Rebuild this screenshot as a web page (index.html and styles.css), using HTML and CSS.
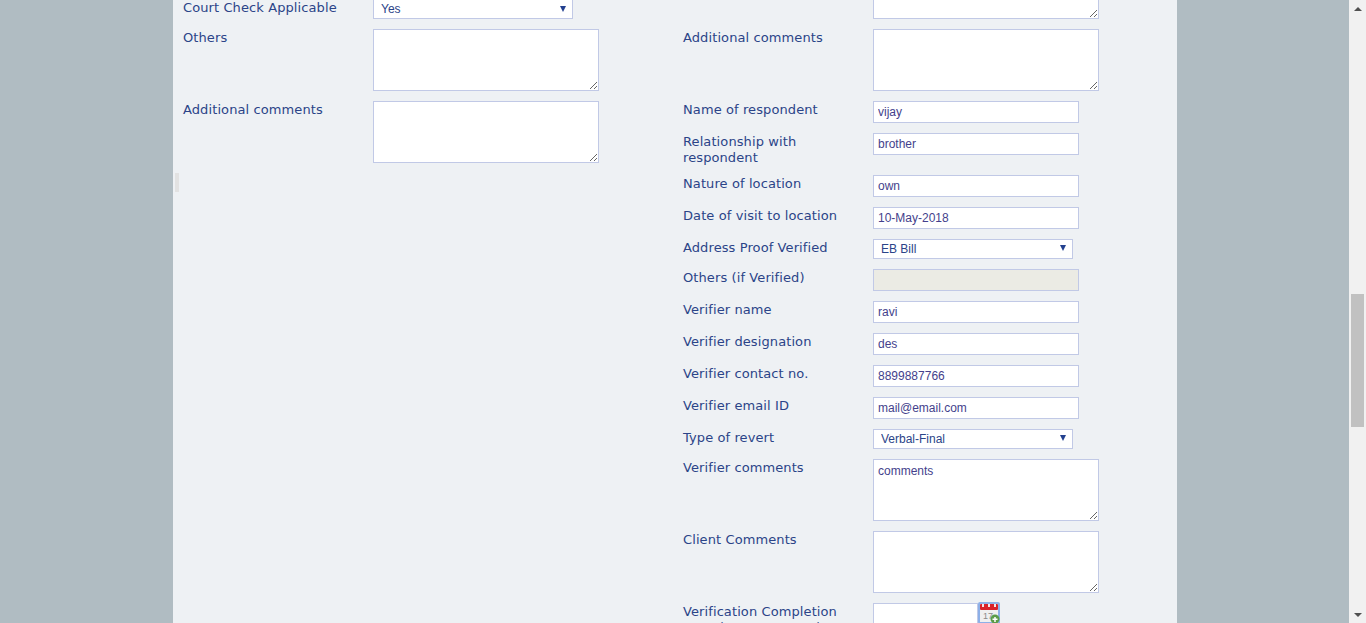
FILE: index.html
```html
<!DOCTYPE html>
<html lang="en">
<head>
    <meta charset="UTF-8">
    <meta name="viewport" content="width=device-width, initial-scale=1.0">
    <title>Verification Form</title>
    <link rel="stylesheet" href="styles.css">
</head>
<body>

    <div class="page">
        <div class="container">
            <div class="drag-handle"></div>
            <form class="form">

                <div class="column">
                    <div class="row row-first">
                        <label>Court Check Applicable</label>
                        <div class="select-box">
                            <select><option>Yes</option></select>
                        </div>
                    </div>
                    <div class="row">
                        <label>Others</label>
                        <textarea></textarea>
                    </div>
                    <div class="row">
                        <label>Additional comments</label>
                        <textarea></textarea>
                    </div>
                </div>

                <div class="column">
                    <div class="row row-first">
                        <label></label>
                        <textarea></textarea>
                    </div>
                    <div class="row">
                        <label>Additional comments</label>
                        <textarea></textarea>
                    </div>
                    <div class="row">
                        <label>Name of respondent</label>
                        <input type="text" value="vijay">
                    </div>
                    <div class="row row-tall">
                        <label>Relationship with respondent</label>
                        <input type="text" value="brother">
                    </div>
                    <div class="row">
                        <label>Nature of location</label>
                        <input type="text" value="own">
                    </div>
                    <div class="row">
                        <label>Date of visit to location</label>
                        <input type="text" value="10-May-2018">
                    </div>
                    <div class="row">
                        <label>Address Proof Verified</label>
                        <div class="select-box">
                            <select><option>EB Bill</option></select>
                        </div>
                    </div>
                    <div class="row">
                        <label>Others (if Verified)</label>
                        <input type="text" disabled>
                    </div>
                    <div class="row">
                        <label>Verifier name</label>
                        <input type="text" value="ravi">
                    </div>
                    <div class="row">
                        <label>Verifier designation</label>
                        <input type="text" value="des">
                    </div>
                    <div class="row">
                        <label>Verifier contact no.</label>
                        <input type="text" value="8899887766">
                    </div>
                    <div class="row">
                        <label>Verifier email ID</label>
                        <input type="text" value="mail@email.com">
                    </div>
                    <div class="row">
                        <label>Type of revert</label>
                        <div class="select-box">
                            <select><option>Verbal-Final</option></select>
                        </div>
                    </div>
                    <div class="row">
                        <label>Verifier comments</label>
                        <textarea>comments</textarea>
                    </div>
                    <div class="row">
                        <label>Client Comments</label>
                        <textarea></textarea>
                    </div>
                    <div class="row row-tall">
                        <label>Verification Completion Date (as per reports)</label>
                        <input type="text" class="date-input">
                        <svg class="calendar" width="22" height="22" viewBox="0 0 22 22">
                            <rect x="0" y="0" width="22" height="22" rx="2" fill="#8db0e8"/>
                            <rect x="2" y="2" width="18" height="18" fill="#f0f0f0"/>
                            <rect x="2" y="2" width="18" height="6" rx="1" fill="#d9222a"/>
                            <rect x="4" y="2" width="2" height="3" fill="#f4e6e6"/>
                            <rect x="10" y="2" width="2" height="3" fill="#f4e6e6"/>
                            <rect x="16" y="2" width="2" height="3" fill="#f4e6e6"/>
                            <text class="calendar-day" x="5" y="17">17</text>
                            <circle cx="17" cy="17" r="4.5" fill="#5c9c48"/>
                            <rect x="14.5" y="16.5" width="5" height="1.5" fill="#fff"/>
                            <rect x="16.25" y="15" width="1.5" height="5" fill="#fff"/>
                        </svg>
                    </div>
                </div>

            </form>
        </div>

        <div class="scrollbar">
            <div class="scroll-arrow arrow-up"></div>
            <div class="scroll-track">
                <div class="scroll-thumb"></div>
            </div>
            <div class="scroll-arrow arrow-down"></div>
        </div>
    </div>

</body>
</html>
```

FILE: styles.css
```css
html, body {
    margin: 0;
    padding: 0;
    height: 100%;
    overflow: hidden;
}

.page {
    display: flex;
    height: 623px;
    background-color: #b0bcc2;
    overflow: hidden;
}

.container {
    position: relative;
    width: 1004px;
    margin-left: 173px;
    margin-right: 172px;
    flex-shrink: 0;
    background-color: #eef1f4;
    overflow: hidden;
}

.drag-handle {
    position: absolute;
    left: 2px;
    top: 173px;
    width: 4px;
    height: 19px;
    background-color: #e2e2e2;
}

.form {
    display: flex;
}

.column {
    width: 500px;
    padding-left: 10px;
    box-sizing: border-box;
}

.row {
    display: flex;
    align-items: flex-start;
    margin-bottom: 10px;
}

.row-first {
    height: 19px;
    align-items: flex-end;
}

.row-tall {
    min-height: 32px;
}

label {
    display: block;
    width: 190px;
    flex-shrink: 0;
    padding-top: 1px;
    padding-right: 20px;
    margin-bottom: -1px;
    box-sizing: border-box;
    font-family: "DejaVu Sans", Verdana, sans-serif;
    font-size: 13px;
    line-height: 16px;
    letter-spacing: 0.1px;
    color: #2b4488;
}

.row-first label {
    align-self: flex-start;
    margin-top: -1px;
}

input,
textarea,
select {
    font-family: "Liberation Sans", Arial, sans-serif;
    font-size: 12px;
    color: #443f8c;
    background-color: #fff;
    border: 1px solid #c1c9e6;
    border-radius: 0;
    box-sizing: border-box;
    margin: 0;
    outline: none;
}

input {
    width: 206px;
    height: 22px;
    padding: 0 4px;
}

input:disabled {
    background-color: #ebebe4;
}

.date-input {
    width: 105px;
}

textarea {
    display: block;
    width: 226px;
    height: 62px;
    padding: 4px;
    flex-shrink: 0;
}

.select-box {
    position: relative;
    width: 200px;
    height: 20px;
}

.select-box::after {
    content: "";
    position: absolute;
    right: 7px;
    top: 6px;
    border-left: 3px solid transparent;
    border-right: 3px solid transparent;
    border-top: 6px solid #23408f;
    pointer-events: none;
}

.row-first .select-box::after {
    top: 7px;
}

select {
    display: block;
    width: 100%;
    height: 100%;
    padding: 0 0 0 7px;
    color: #2b4488;
    appearance: none;
}

.calendar {
    margin-top: -1px;
    flex-shrink: 0;
}

.calendar-day {
    font-family: "Liberation Sans", Arial, sans-serif;
    font-size: 9px;
    fill: #8a8a8a;
}

.scrollbar {
    width: 17px;
    flex-shrink: 0;
    display: flex;
    flex-direction: column;
    background-color: #f1f1f1;
}

.scroll-arrow {
    height: 17px;
    flex-shrink: 0;
    display: flex;
    align-items: center;
    justify-content: center;
}

.arrow-up::before {
    content: "";
    border-left: 4px solid transparent;
    border-right: 4px solid transparent;
    border-bottom: 4px solid #505050;
}

.arrow-down::before {
    content: "";
    border-left: 4px solid transparent;
    border-right: 4px solid transparent;
    border-top: 4px solid #505050;
}

.scroll-track {
    flex: 1;
    padding-top: 277px;
}

.scroll-thumb {
    width: 13px;
    height: 133px;
    margin-left: 2px;
    background-color: #c1c1c1;
}
```
